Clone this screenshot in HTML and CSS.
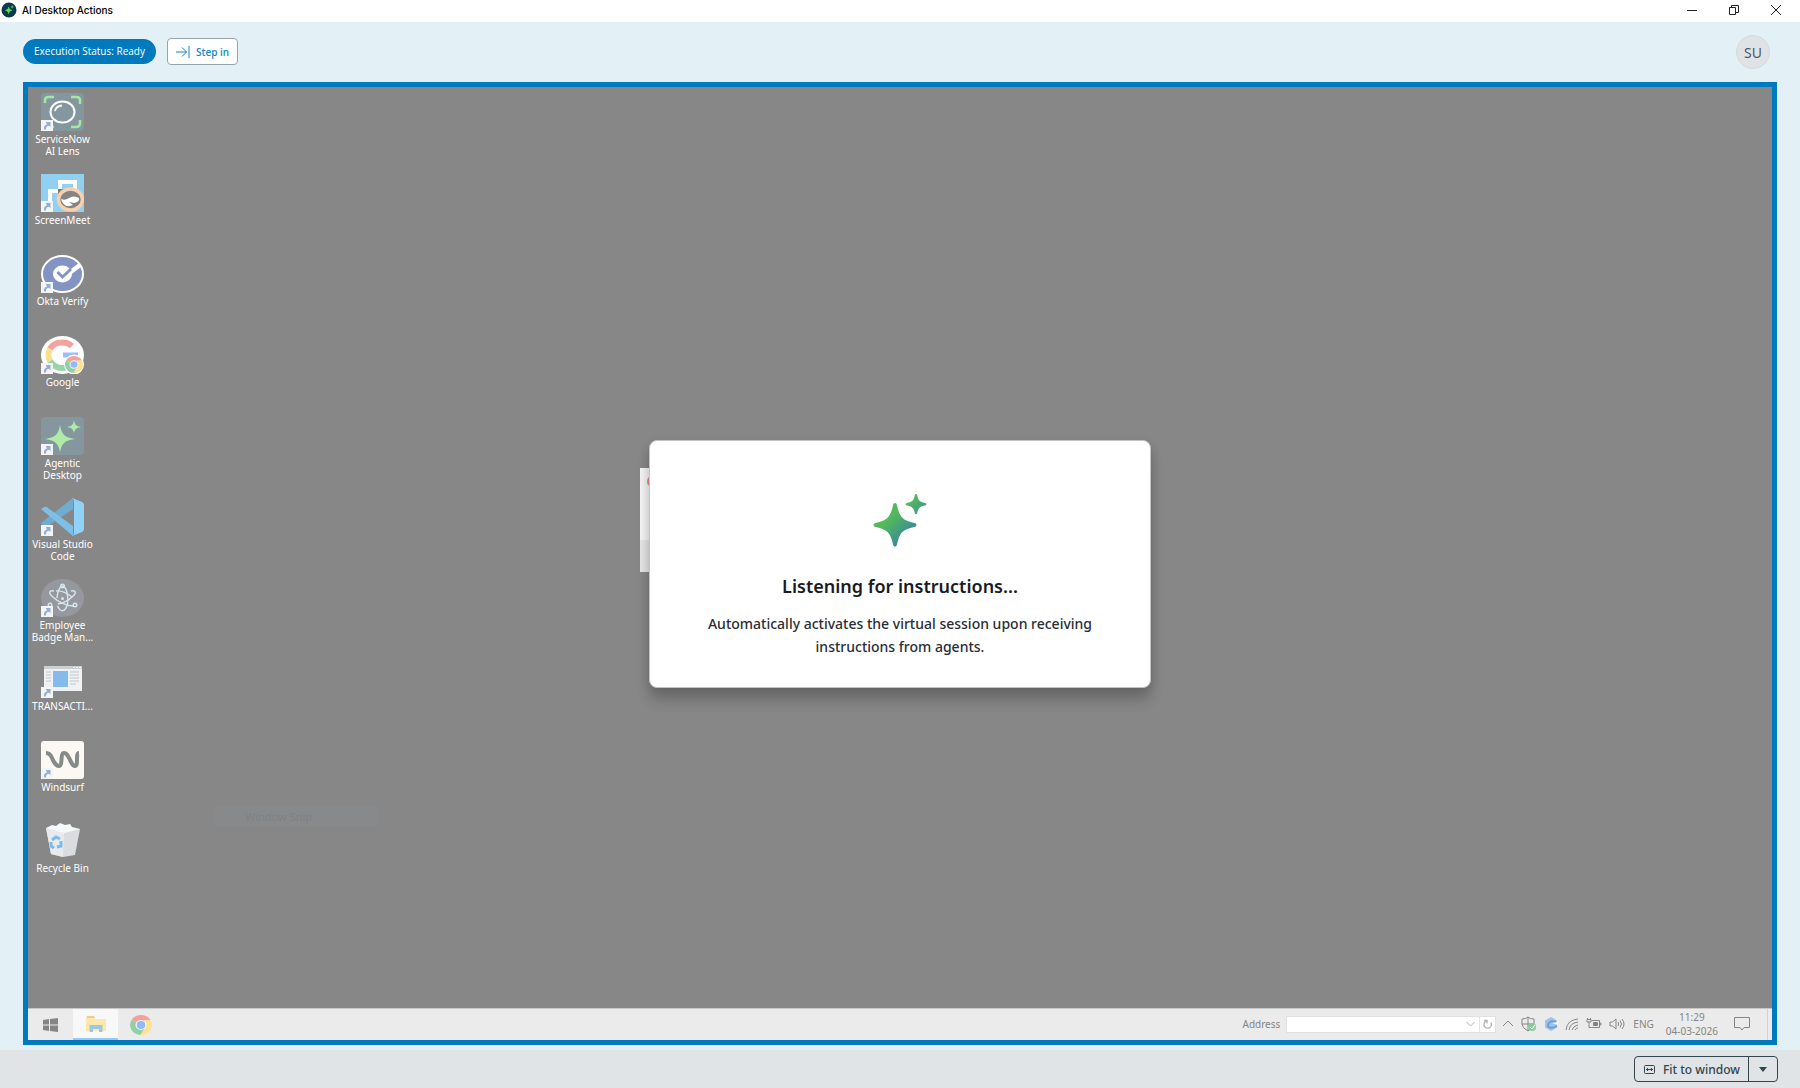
FILE: index.html
```html
<!DOCTYPE html>
<html lang="en">
<head>
  <meta charset="UTF-8">
  <title>AI Desktop Actions</title>
  <meta name="viewport" content="width=device-width, initial-scale=1.0">
  <link rel="stylesheet" href="styles.css">
</head>
<body>
  <!-- shared shapes -->
  <svg class="defs" width="0" height="0" aria-hidden="true">
    <defs>
      <linearGradient id="sparkleGradient" gradientUnits="userSpaceOnUse" x1="12" y1="20" x2="38" y2="48">
        <stop offset="0.2" stop-color="#53b95b"/>
        <stop offset="0.9" stop-color="#38869d"/>
      </linearGradient>
      <symbol id="sparkle" viewBox="0 0 54 54">
        <path d="M22 10c1.200 0 1.700.8 2 2.200 2.400 11.500 5.600 15.400 17.300 17.800 2.900.7 2.900 3.300 0 4C29.600 36.400 26.400 40 24 51.500c-.7 2.700-3.300 2.700-4 0C17.600 40 14.200 36.400 2.700 34c-2.900-.7-2.900-3.300 0-4C14.200 27.600 17.600 23.700 20 12.200c.3-1.400.8-2.200 2-2.200z"/>
        <path d="M43 1c.7 0 1 .5 1.200 1.300 1.100 5.200 2.400 6.600 7.900 7.700 1.700.4 1.700 2 0 2.400-5.500 1.100-6.800 2.500-7.900 7.700-.4 1.600-2 1.600-2.400 0-1.100-5.200-2.500-6.600-7.900-7.700-1.700-.4-1.700-2 0-2.400 5.400-1.100 6.800-2.500 7.900-7.700.2-.8.500-1.300 1.200-1.300z"/>
      </symbol>
      <symbol id="chrome" viewBox="0 0 22 20" preserveAspectRatio="none">
        <path d="M11 10 1.500 5A11 10 0 0 1 20.500 5z" fill="#f0a29d"/>
        <path d="M1.500 5A11 10 0 0 0 10.500 20L15.200 12.500 11 10z" fill="#92cfa5"/>
        <path d="M20.500 5A11 10 0 0 1 10.500 20L15.800 12 14 5z" fill="#fde293"/>
        <ellipse cx="11" cy="10" rx="5.500" ry="5" fill="#f5f7fa"/>
        <ellipse cx="11" cy="10" rx="4.300" ry="3.900" fill="#92b9f8"/>
      </symbol>
      <symbol id="shortcut" viewBox="0 0 12 11">
        <path d="M0 0h12v11H0z" fill="#f3f4f6"/>
        <path d="M3 9.500C2.500 6.500 4 4.800 6 4.500L4.800 2H9.500v5L8 5.800C6 6 4.800 7.200 5 9.500z" fill="#94aed2"/>
      </symbol>
    </defs>
  </svg>

  <header class="titlebar">
    <svg class="app-logo" viewBox="0 0 16 16">
      <circle cx="8" cy="8" r="7.500" fill="#0c3a4b"/>
      <use href="#sparkle" x="4" y="3" width="9" height="9" fill="#5fd65b"/>
    </svg>
    <h1>AI Desktop Actions</h1>
    <div class="window-controls">
      <button type="button" aria-label="Minimize"><svg viewBox="0 0 12 12"><path d="M1 6.500h10"/></svg></button>
      <button type="button" aria-label="Restore"><svg viewBox="0 0 12 12"><path d="M1.500 3.500h6v7h-6zM3.500 3.500v-2h7v7h-3"/></svg></button>
      <button type="button" aria-label="Close"><svg viewBox="0 0 12 12"><path d="M1 1l10 10M11 1L1 11"/></svg></button>
    </div>
  </header>

  <div class="toolbar">
    <span class="status">Execution Status: Ready</span>
    <button class="step-in" type="button">
      <svg viewBox="0 0 14 12"><path d="M0 6h10.500M6 1.500L10.500 6 6 10.500M13 0v12"/></svg>
      Step in
    </button>
    <span class="avatar">SU</span>
  </div>

  <main class="session">
    <div class="desktop">
      <ul class="shortcuts">
        <li>
          <svg class="icon" viewBox="0 0 43 38">
            <rect width="43" height="38" rx="4" fill="#84979f"/>
            <path d="M4 10V7q0-3 4-3h5M30 4h5q4 0 4 3v4M39 27v3q0 4-4 4h-5M13 34H9" fill="none" stroke="#a7e5a0" stroke-width="2.500"/>
            <ellipse cx="21.500" cy="19" rx="12" ry="10.500" fill="none" stroke="#fff" stroke-width="2"/>
            <path d="M14 18q1-5 7-5.500" fill="none" stroke="#fff" stroke-width="1.800"/>
            <use href="#shortcut" x="0" y="27" width="12" height="11"/>
          </svg>
          <span>ServiceNow AI Lens</span>
        </li>
        <li>
          <svg class="icon" viewBox="0 0 43 38">
            <rect width="43" height="38" fill="#92d0f2"/>
            <path d="M9 31V17h8M19 15V8h15v8" fill="none" stroke="#fff" stroke-width="4"/>
            <path d="M17 15h7v5h-7z" fill="#777b7e"/>
            <ellipse cx="29.500" cy="25.500" rx="12" ry="10.500" fill="#858585" stroke="#f8d0ae" stroke-width="3.500"/>
            <path d="M20 25q4 2 8-1 5-3 10 0 1 4-5 5l-5-1 4 3q-9 4-12-6z" fill="#fff"/>
            <use href="#shortcut" x="0" y="27" width="12" height="11"/>
          </svg>
          <span>ScreenMeet</span>
        </li>
        <li>
          <svg class="icon" viewBox="0 0 43 38">
            <ellipse cx="21.500" cy="19" rx="20.500" ry="18" fill="#8494c2" stroke="#fff" stroke-width="2"/>
            <ellipse cx="21.500" cy="19" rx="9.500" ry="8.500" fill="#fff"/>
            <path d="M16.500 18l5 5L39 10" fill="none" stroke="#fff" stroke-width="4.500"/>
            <path d="M16.500 17l5 5L30 14" fill="none" stroke="#8494c2" stroke-width="3"/>
            <use href="#shortcut" x="0" y="27" width="12" height="11"/>
          </svg>
          <span>Okta Verify</span>
        </li>
        <li>
          <svg class="icon" viewBox="0 0 43 38">
            <ellipse cx="21.500" cy="19" rx="21.500" ry="19" fill="#fff"/>
            <g fill="none" stroke-width="6">
              <path d="M9 13Q13 6 22 6.500q5 0 9 3.500" stroke="#f3a39d"/>
              <path d="M9 25q-3-6 0-12" stroke="#fbdf8d"/>
              <path d="M9 25q4 7 13 7 3 0 6-1" stroke="#98d4a8"/>
              <path d="M22 19h15" stroke="#99bdf8" stroke-width="5"/>
            </g>
            <circle cx="33" cy="28.500" r="10" fill="#fff"/>
            <use href="#chrome" x="24" y="20" width="18" height="17"/>
            <use href="#shortcut" x="0" y="27" width="12" height="11"/>
          </svg>
          <span>Google</span>
        </li>
        <li>
          <svg class="icon" viewBox="0 0 43 38">
            <rect width="43" height="38" rx="4" fill="#84979f"/>
            <path d="M19 8c2 10 4 12 15 14-11 2-13 4-15 13-2-9-4-11-15-13 11-2 13-4 15-14z" fill="#afeaa8"/>
            <path d="M33 3c1 5 2 6 7 7-5 1-6 2-7 6-1-4-2-5-7-6 5-1 6-2 7-7z" fill="#afeaa8"/>
            <use href="#shortcut" x="0" y="27" width="12" height="11"/>
          </svg>
          <span>Agentic Desktop</span>
        </li>
        <li>
          <svg class="icon" viewBox="0 0 43 38">
            <path d="M32 0L0 25l3 4q2 1 4-1L32 11z" fill="#72abd0"/>
            <path d="M0 11l3-2q2-1 4 1l25 18v10z" fill="#7dbfe6"/>
            <path d="M31 0l10 4q2 1 2 3v24q0 2-2 3l-10 4q2-1 2-3V4q0-3-2-4z" fill="#91d3f7"/>
            <use href="#shortcut" x="0" y="27" width="12" height="11"/>
          </svg>
          <span>Visual Studio Code</span>
        </li>
        <li>
          <svg class="icon" viewBox="0 0 43 38">
            <ellipse cx="21.500" cy="19" rx="21.500" ry="19" fill="#97979f"/>
            <g fill="none" stroke="#d3e8ea" stroke-width="1.400">
              <path d="M13 12C8 11 7 14 12 18c5 5 14 9 20 9M30 12c5-1 6 2 1 6-4 4-9 6-14 7"/>
              <path d="M21.500 7c5 1 6 13 5 18-2 8-7 9-10 2M21.500 7c-4 1-5 7-5.500 12"/>
              <path d="M15 12q7-1 16 6"/>
              <circle cx="21.500" cy="7" r="1.800"/><circle cx="9" cy="26" r="1.800"/><circle cx="34" cy="26" r="1.800"/>
            </g>
            <circle cx="21.500" cy="19.500" r="1.500" fill="#d3e8ea"/>
            <use href="#shortcut" x="0" y="27" width="12" height="11"/>
          </svg>
          <span>Employee Badge Man...</span>
        </li>
        <li>
          <svg class="icon" viewBox="0 0 43 38">
            <path d="M3 6h38v25H3z" fill="#eff1f3"/>
            <path d="M3 6h38v3H3z" fill="#cdd0d3"/>
            <path d="M12 11h15v16H12z" fill="#83bcec"/>
            <path d="M5 12h5M5 15h5M5 18h5M5 21h5M29 12h9M29 15h9M29 18h9M29 21h9M29 24h6" stroke="#c3c7ca"/>
            <path d="M32 7.500h2M35 7.500h2M38 7.500h2" stroke="#fff"/>
            <use href="#shortcut" x="0" y="27" width="12" height="11"/>
          </svg>
          <span>TRANSACTI...</span>
        </li>
        <li>
          <svg class="icon" viewBox="0 0 43 38">
            <rect width="43" height="38" rx="3" fill="#fcf9f5"/>
            <path d="M5 12q4 0 6 5c2 5 5 8 7 8 4 0 1-13 5-13 3 0 4 3 6 7s3 6 5 6c4 0 0-13 4-13" fill="none" stroke="#858b89" stroke-width="4"/>
            <use href="#shortcut" x="0" y="27" width="12" height="11"/>
          </svg>
          <span>Windsurf</span>
        </li>
        <li>
          <svg class="icon" viewBox="0 0 43 38">
            <path d="M5 6l34 1-5 26-12 2-12-3z" fill="#dadddf"/>
            <path d="M5 6l18 4-1 25-12-3z" fill="#e8eaec"/>
            <path d="M5 6l6-3 4 1 4-3 5 2 5-1 2 3 8 2-16 4z" fill="#f7f8f9"/>
            <path d="M11 18l4-3 4 2M20 19l0 5-4 1M13 26l-3-2 0-4" fill="none" stroke="#79bdea" stroke-width="3"/>
          </svg>
          <span>Recycle Bin</span>
        </li>
      </ul>

      <div class="snip-ghost">Window Snip</div>
      <div class="back-window"></div>

      <div class="dialog" role="dialog" aria-labelledby="dialogTitle">
        <svg class="dialog-icon" viewBox="0 0 54 54"><use href="#sparkle" fill="url(#sparkleGradient)"/></svg>
        <h2 id="dialogTitle">Listening for instructions...</h2>
        <p>Automatically activates the virtual session upon receiving instructions from agents.</p>
      </div>
    </div>

    <div class="taskbar">
      <button class="task" type="button" aria-label="Start">
        <svg width="15" height="14" viewBox="0 0 15 14"><path d="M0 2l6-1v5.500H0zM7 1l8-1v6.500H7zM0 7.500h6V13l-6-1zM7 7.500h8V14l-8-1z" fill="#858585"/></svg>
      </button>
      <button class="task active" type="button" aria-label="File Explorer">
        <svg width="20" height="16" viewBox="0 0 20 16">
          <path d="M0 1h8l1 2h11v12H0z" fill="#fde7ab"/>
          <path d="M1 0h7l1 2H1z" fill="#eecb8b"/>
          <path d="M3.500 16V9h13v7H13v-3H7v3z" fill="#98c9eb"/>
        </svg>
      </button>
      <button class="task" type="button" aria-label="Chrome">
        <svg width="22" height="20"><use href="#chrome"/></svg>
      </button>
      <div class="tray">
        <label for="address">Address</label>
        <div class="address-box">
          <input type="text" id="address" name="address">
          <svg width="9" height="6" viewBox="0 0 9 6"><path d="M.5 1l4 4 4-4"/></svg>
          <button type="button" aria-label="Refresh">
            <svg width="10" height="10" viewBox="0 0 10 10"><path d="M7.800 3.500A3.700 3.700 0 1 1 3.500 2M1 1.500h3v3" stroke-width="1.300"/></svg>
          </button>
        </div>
        <div class="tray-icons">
          <svg width="12" height="16" viewBox="0 0 12 16"><path d="M1 10l5-5 5 5"/></svg>
          <svg width="16" height="16" viewBox="0 0 16 16">
            <path d="M1 3q4 0 6-2 2 2 6 2v5q0 4-6 7-6-3-6-7zM7 1v14M1 8h12"/>
            <circle cx="11" cy="11" r="4" fill="#88c99d" stroke="none"/><path d="M9 11l2 2 3-4" stroke="#fff"/>
          </svg>
          <svg width="14" height="16" viewBox="0 0 14 16">
            <path d="M7 1l6 3.500v7L7 15l-6-3.500v-7z" fill="#9dc3ea" stroke="none"/>
            <path d="M12 6Q7 4 5 7t0 4q3 2 8-1" stroke="#6f9fd0" stroke-width="2"/><path d="M8 7l6-1v3z" fill="#fff" stroke="none"/>
          </svg>
          <svg width="14" height="16" viewBox="0 0 14 16"><path d="M1 14Q2 4 13 3M4 14q1-7 9-8M7 14q1-4 6-5M10 14q1-2 3-2"/></svg>
          <svg width="16" height="16" viewBox="0 0 16 16"><path d="M5.500 4.500h8v7h-8M14 7h1v2h-1M1 3.500h4v2.500H1zM3 6v5.500h2.500M1.500 2v2M4.500 2v2"/><path d="M7.500 6.500h4v3h-4z" fill="#858585"/></svg>
          <svg width="16" height="16" viewBox="0 0 16 16"><path d="M1 6h2.500L7 3v10l-3.500-3H1zM9 6q1.500 2 0 4M11 4.500q3 3.500 0 7M13 3q4 5 0 10"/></svg>
        </div>
        <span class="lang">ENG</span>
        <div class="clock"><time>11:29</time><time>04-03-2026</time></div>
        <svg class="notify" width="16" height="14" viewBox="0 0 16 14"><path d="M.5.5h15v10H10L8 13l-2-2.500H.5z"/></svg>
      </div>
      <div class="show-desktop"></div>
    </div>
  </main>

  <footer class="footer">
    <div class="zoom-control">
      <button class="fit" type="button">
        <svg width="11" height="9" viewBox="0 0 11 9"><rect x="0.500" y="0.500" width="10" height="8" rx="1"/><path d="M2 4.500h7M4 3L2.500 4.500 4 6M7 3l1.500 1.500L7 6"/></svg>
        Fit to window
      </button>
      <button class="more" type="button" aria-label="Zoom options">
        <svg width="8" height="5" viewBox="0 0 8 5"><path d="M0 0h8L4 5z" fill="#33464e"/></svg>
      </button>
    </div>
  </footer>
</body>
</html>
```

FILE: styles.css
```css
* {
  box-sizing: border-box;
}
body {
  margin: 0;
  height: 100vh;
  display: flex;
  flex-direction: column;
  background: #e3f1f6;
  font-family: "Noto Sans", "Open Sans", sans-serif;
  overflow: hidden;
}
button {
  font-family: inherit;
  border: none;
  background: none;
  padding: 0;
  margin: 0;
  cursor: pointer;
}
svg {
  display: block;
}
.defs {
  position: absolute;
}

/* title bar */
.titlebar {
  display: flex;
  align-items: center;
  height: 22px;
  padding-left: 1px;
  background: #fff;
}
.app-logo {
  width: 16px;
  height: 16px;
  margin: 0 5px 2px 0;
}
.titlebar h1 {
  margin: 0 0 2px;
  font-family: Inter, sans-serif;
  font-size: 10px;
  line-height: 16px;
  font-weight: 500;
  color: #000;
}
.window-controls {
  display: flex;
  margin: 0 3px 2px auto;
}
.window-controls button {
  display: flex;
  align-items: center;
  justify-content: center;
  width: 42px;
  height: 20px;
}
.window-controls svg {
  width: 12px;
  height: 12px;
  fill: none;
  stroke: #222;
}

/* toolbar */
.toolbar {
  display: flex;
  align-items: center;
  gap: 11px;
  height: 60px;
  padding: 0 30px 1px 23px;
}
.status {
  height: 25px;
  padding: 0 11px;
  border-radius: 13px;
  background: #007abf;
  color: #fff;
  font-family: "Open Sans", sans-serif;
  font-size: 10px;
  line-height: 25px;
}
.step-in {
  display: flex;
  align-items: center;
  gap: 6px;
  height: 27px;
  padding: 0 8px;
  border: 1px solid #98a3ab;
  border-radius: 4px;
  background: #fff;
  color: #1686c4;
  font-family: "Open Sans", sans-serif;
  font-size: 10px;
  font-weight: 600;
}
.step-in svg {
  width: 14px;
  height: 12px;
  fill: none;
  stroke: #1686c4;
}
.avatar {
  width: 34px;
  height: 34px;
  margin-left: auto;
  border: 1px solid #d5dadd;
  border-radius: 50%;
  background: #e0e3e6;
  color: #4c5a62;
  font-size: 14px;
  line-height: 34px;
  text-align: center;
}

/* remote session */
.session {
  flex: 1;
  display: flex;
  flex-direction: column;
  margin: 0 23px 5px;
  border: 5px solid #007abf;
}
.desktop {
  position: relative;
  flex: 1;
  display: flex;
  min-height: 0;
  background: #878787;
}
.shortcuts {
  list-style: none;
  margin: 0;
  padding: 6px 0 0;
  width: 69px;
}
.shortcuts li {
  display: flex;
  flex-direction: column;
  align-items: center;
  gap: 2px;
  height: 81px;
  padding: 0 2px;
  color: #fff;
  font-size: 10px;
  line-height: 12px;
  text-align: center;
}
.icon {
  width: 43px;
  height: 38px;
}
.snip-ghost {
  position: absolute;
  left: 187px;
  bottom: 181px;
  width: 162px;
  height: 21px;
  padding-left: 30px;
  background: #87898b;
  color: #7f8183;
  font-size: 11px;
  line-height: 21px;
}
/* window peeking out from behind the dialog */
.back-window {
  position: absolute;
  top: 381px;
  left: 50%;
  width: 200px;
  height: 104px;
  margin-left: -260px;
  background: linear-gradient(#f5f5f5 72px, #e6e6e6 72px);
}
.back-window::before {
  content: "";
  position: absolute;
  top: 7px;
  left: 7px;
  width: 9px;
  height: 9px;
  border: 2px solid #e58b86;
  border-radius: 50%;
}
.dialog {
  position: absolute;
  top: 50%;
  left: 50%;
  transform: translate(-50%, -50%);
  margin-top: 16px;
  width: 502px;
  padding: 52px 50px 29px;
  border: 1px solid #c4c4c8;
  border-radius: 8px;
  background: #fff;
  box-shadow: 0 12px 14px rgba(0, 0, 0, 0.2), 0 2px 10px rgba(0, 0, 0, 0.1);
  text-align: center;
}
.dialog-icon {
  width: 54px;
  height: 54px;
  margin: 0 auto 27px;
}
.dialog h2 {
  margin: 0 0 14px;
  font-size: 18px;
  line-height: 24px;
  font-weight: 600;
  color: #181b24;
}
.dialog p {
  margin: 0;
  font-size: 14px;
  line-height: 23px;
  font-weight: 500;
  color: #2a2d36;
}

/* taskbar */
.taskbar {
  display: flex;
  height: 32px;
  border-top: 1px solid #c8c8c8;
  background: #ebebeb;
  color: #858585;
}
.task {
  display: flex;
  align-items: center;
  justify-content: center;
  width: 45px;
}
.task.active {
  background: #f8f8f8;
  border-bottom: 2px solid #98c9f0;
}
.tray {
  display: flex;
  align-items: center;
  margin-left: auto;
  padding: 0 17px 1px 0;
  font-size: 10px;
}
.tray svg {
  fill: none;
  stroke: #858585;
}
.show-desktop {
  width: 5px;
  border-left: 1px solid #d2d2d2;
}
.address-box {
  display: flex;
  align-items: center;
  width: 210px;
  height: 17px;
  margin: 0 6px;
  border: 1px solid #e0e0e0;
  background: #fff;
}
.address-box input {
  flex: 1;
  min-width: 0;
  height: 15px;
  border: none;
  outline: none;
  background: none;
}
.address-box button {
  display: flex;
  align-items: center;
  justify-content: center;
  width: 16px;
  height: 15px;
  margin-left: 4px;
  border-left: 1px solid #e3e3e3;
}
.address-box svg {
  stroke: #b0b0b0;
}
.tray-icons {
  display: flex;
  gap: 7px;
}
.lang {
  margin: 0 12px 0 8px;
}
.clock {
  display: flex;
  flex-direction: column;
  line-height: 14px;
  text-align: center;
}
.notify {
  margin-left: 16px;
}

/* footer */
.footer {
  display: flex;
  justify-content: flex-end;
  align-items: center;
  height: 38px;
  padding: 0 22px;
  background: #e0e4e7;
}
.zoom-control {
  display: flex;
  height: 26px;
  border: 1px solid #33464e;
  border-radius: 4px;
}
.zoom-control button {
  display: flex;
  align-items: center;
  justify-content: center;
  color: #33464e;
}
.zoom-control .fit {
  gap: 8px;
  padding: 0 8px 0 9px;
  font-size: 12px;
  font-weight: 500;
}
.fit svg {
  fill: none;
  stroke: #33464e;
}
.zoom-control .more {
  width: 29px;
  border-left: 1px solid #33464e;
}
```
